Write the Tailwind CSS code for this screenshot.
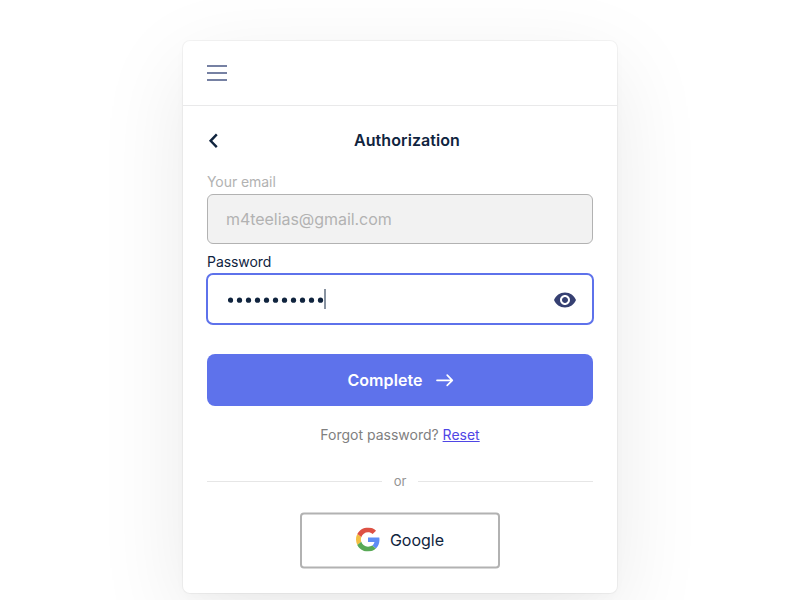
<!DOCTYPE html>
<html lang="en">
<head>
<meta charset="utf-8">
<title>Authorization</title>
<script src="https://cdn.jsdelivr.net/npm/@tailwindcss/browser@4"></script>
</head>
<body class="h-[600px] overflow-hidden bg-white font-['Inter','Liberation_Sans',sans-serif] text-[#10243e]">
<main class="mx-auto mt-[41px] flex h-[552px] w-[434px] flex-col rounded-[7px] bg-white shadow-[0_0_0_1px_rgba(0,0,0,0.04),0_4px_12px_rgba(0,0,0,0.02),0_26px_90px_rgba(0,0,0,0.085)]">
  <header class="flex h-[65px] shrink-0 items-center border-b border-[#e9e9ea] px-6">
    <button aria-label="Menu" class="flex w-5 flex-col gap-[5px]">
      <span class="h-0.5 w-full bg-[#7681a3]"></span>
      <span class="h-0.5 w-full bg-[#7681a3]"></span>
      <span class="h-0.5 w-full bg-[#7681a3]"></span>
    </button>
  </header>
  <div class="flex flex-col px-6">
    <div class="mt-[22px] grid h-6 grid-cols-[24px_1fr_10px] items-center">
      <svg class="ml-px mt-px h-4 w-3" viewBox="0 0 12 16" fill="none" stroke="#10243e" stroke-width="2.4"><path d="M8.8 1.4 2.6 7.8l6.2 6.4"/></svg>
      <h1 class="text-center text-base font-semibold tracking-[0.08px]">Authorization</h1>
    </div>
    <label class="mt-5 text-sm leading-5 tracking-[-0.06px] text-[#b2b2b2]">Your email</label>
    <div class="mt-[2px] flex h-[50px] items-center rounded-md border border-[#b2b2b2] bg-[#f2f2f2] px-[18px] text-base tracking-[-0.05px] text-[#b2b2b2]">m4teelias@gmail.com</div>
    <label class="mt-2 text-sm leading-5 tracking-[-0.06px]">Password</label>
    <div class="-mx-px mt-px flex h-[52px] items-center justify-between rounded-[7px] border-2 border-[#5e72eb] pr-[15px] pl-5">
      <div class="flex items-center">
        <svg class="h-5 w-24" viewBox="0 0 96 20" fill="#10243e"><circle cx="2.5" cy="11.2" r="2.6"/><circle cx="11.5" cy="11.2" r="2.6"/><circle cx="20.5" cy="11.2" r="2.6"/><circle cx="29.5" cy="11.2" r="2.6"/><circle cx="38.5" cy="11.2" r="2.6"/><circle cx="47.5" cy="11.2" r="2.6"/><circle cx="56.5" cy="11.2" r="2.6"/><circle cx="65.5" cy="11.2" r="2.6"/><circle cx="74.5" cy="11.2" r="2.6"/><circle cx="83.5" cy="11.2" r="2.6"/><circle cx="92.5" cy="11.2" r="2.6"/></svg>
        <span class="h-5 w-0.5 bg-[#8792a0]"></span>
      </div>
      <svg class="mt-[2px] h-6 w-6" viewBox="0 0 24 24" fill="#364072"><path d="M12 4.5C7 4.5 2.73 7.61 1 12c1.73 4.39 6 7.5 11 7.5s9.27-3.11 11-7.5c-1.73-4.39-6-7.5-11-7.5zM12 17c-2.76 0-5-2.24-5-5s2.24-5 5-5 5 2.24 5 5-2.24 5-5 5zm0-8c-1.66 0-3 1.34-3 3s1.34 3 3 3 3-1.34 3-3-1.34-3-3-3z"/></svg>
    </div>
    <button class="mt-[29px] flex h-[52px] items-center justify-center gap-[13px] rounded-lg bg-[#5e72eb] pl-px text-base font-semibold tracking-[0.08px] text-white">
      Complete
      <svg class="h-3.5 w-[18px]" viewBox="0 0 18 14" fill="none" stroke="white" stroke-width="1.7" stroke-linecap="round" stroke-linejoin="round"><path d="M1 7.3h15.2M11.2 2.2l5.1 5.1-5.1 5.1"/></svg>
    </button>
    <p class="mt-[19px] text-center text-sm leading-5 text-[#808080]">Forgot password? <a class="text-[#4f46e5] underline">Reset</a></p>
    <div class="mt-[26px] flex h-5 items-center gap-3 text-[13px] leading-5 text-[#949494]">
      <span class="mt-px h-px flex-1 bg-[#e6e6e6]"></span>or<span class="mt-px h-px flex-1 bg-[#e6e6e6]"></span>
    </div>
    <button class="mx-auto mt-[21px] flex h-14 w-[200px] translate-y-[0.5px] items-center justify-center gap-[10px] rounded border-2 border-[#b2b2b2] text-base">
      <svg class="-mt-[3px] h-6 w-6" viewBox="0 0 48 48"><path fill="#dd5144" d="M24 9.5c3.54 0 6.71 1.22 9.21 3.6l6.85-6.85C35.9 2.38 30.47 0 24 0 14.62 0 6.51 5.38 2.56 13.22l7.98 6.19C12.43 13.72 17.74 9.5 24 9.5z"/><path fill="#5f8df5" d="M46.98 24.55c0-1.57-.15-3.09-.38-4.55H24v9.02h12.94c-.58 2.96-2.26 5.48-4.78 7.18l7.73 6c4.51-4.18 7.09-10.36 7.09-17.65z"/><path fill="#f3bf42" d="M10.53 28.59A14.5 14.5 0 0 1 9.77 24c0-1.6.27-3.14.76-4.59l-7.98-6.19A23.9 23.9 0 0 0 0 24c0 3.88.92 7.54 2.56 10.78l7.97-6.19z"/><path fill="#58a956" d="M24 48c6.48 0 11.93-2.13 15.89-5.81l-7.73-6c-2.15 1.45-4.92 2.3-8.16 2.3-6.26 0-11.57-4.22-13.47-9.91l-7.98 6.19C6.51 42.62 14.62 48 24 48z"/></svg>
      <span class="pb-[2px]">Google</span>
    </button>
  </div>
</main>
</body>
</html>
